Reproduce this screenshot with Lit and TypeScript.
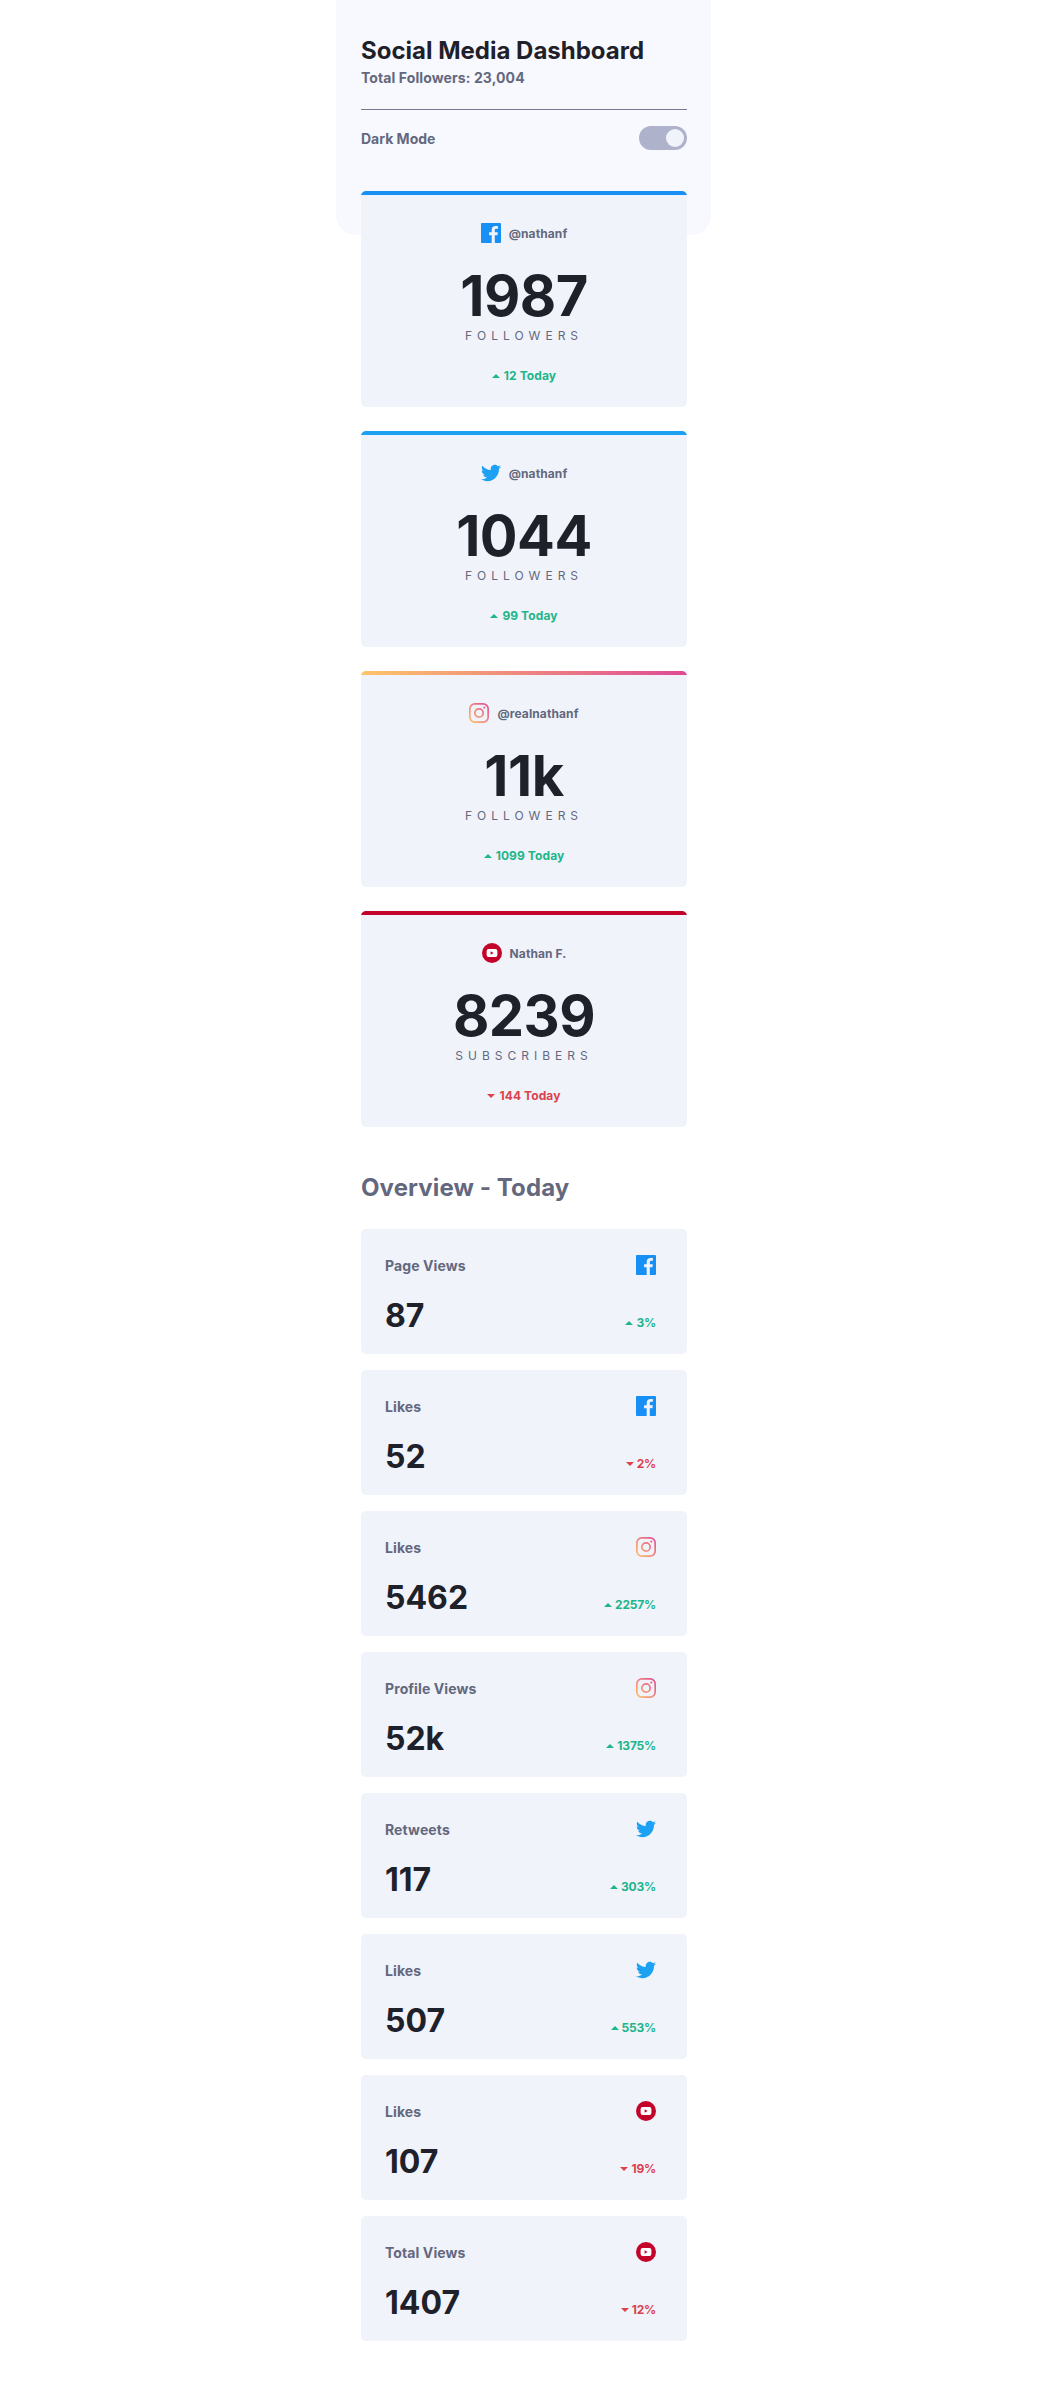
import { LitElement, html, css, svg } from 'lit';
import { customElement } from 'lit/decorators.js';

type Network = 'facebook' | 'twitter' | 'instagram' | 'youtube';

const followers: { net: Network; handle: string; count: string; label: string; delta: string; up: boolean }[] = [
  { net: 'facebook', handle: '@nathanf', count: '1987', label: 'FOLLOWERS', delta: '12 Today', up: true },
  { net: 'twitter', handle: '@nathanf', count: '1044', label: 'FOLLOWERS', delta: '99 Today', up: true },
  { net: 'instagram', handle: '@realnathanf', count: '11k', label: 'FOLLOWERS', delta: '1099 Today', up: true },
  { net: 'youtube', handle: 'Nathan F.', count: '8239', label: 'SUBSCRIBERS', delta: '144 Today', up: false },
];

const overview: { net: Network; title: string; count: string; delta: string; up: boolean }[] = [
  { net: 'facebook', title: 'Page Views', count: '87', delta: '3%', up: true },
  { net: 'facebook', title: 'Likes', count: '52', delta: '2%', up: false },
  { net: 'instagram', title: 'Likes', count: '5462', delta: '2257%', up: true },
  { net: 'instagram', title: 'Profile Views', count: '52k', delta: '1375%', up: true },
  { net: 'twitter', title: 'Retweets', count: '117', delta: '303%', up: true },
  { net: 'twitter', title: 'Likes', count: '507', delta: '553%', up: true },
  { net: 'youtube', title: 'Likes', count: '107', delta: '19%', up: false },
  { net: 'youtube', title: 'Total Views', count: '1407', delta: '12%', up: false },
];

let gradientId = 0;

function icon(net: Network) {
  if (net === 'facebook') {
    return html`<svg width="20" height="20" viewBox="0 0 20 20"><path fill="#178ff5" d="M18.896 0H1.104C.494 0 0 .494 0 1.104v17.792C0 19.506.494 20 1.104 20h9.579v-7.745H8.076V9.237h2.607V7.01c0-2.584 1.578-3.99 3.883-3.99 1.104 0 2.052.082 2.329.119v2.7h-1.598c-1.254 0-1.496.596-1.496 1.47v1.927h2.989l-.39 3.018h-2.6V20h5.097c.61 0 1.104-.494 1.104-1.104V1.104C20 .494 19.506 0 18.896 0z"/></svg>`;
  }
  if (net === 'twitter') {
    return html`<svg width="20" height="20" viewBox="0 0 24 24"><path fill="#1da1f2" d="M23.954 4.569c-.885.389-1.83.654-2.825.775 1.014-.611 1.794-1.574 2.163-2.723-.951.555-2.005.959-3.127 1.184-.896-.959-2.173-1.559-3.591-1.559-2.717 0-4.92 2.203-4.92 4.917 0 .39.045.765.127 1.124C7.691 8.094 4.066 6.13 1.64 3.161c-.427.722-.666 1.561-.666 2.475 0 1.71.87 3.213 2.188 4.096-.807-.026-1.566-.248-2.228-.616v.061c0 2.385 1.693 4.374 3.946 4.827-.413.111-.849.171-1.296.171-.314 0-.615-.03-.916-.086.631 1.953 2.445 3.377 4.604 3.417-1.68 1.319-3.809 2.105-6.102 2.105-.39 0-.779-.023-1.17-.067 2.189 1.394 4.768 2.209 7.557 2.209 9.054 0 13.999-7.496 13.999-13.986 0-.209 0-.42-.015-.63.961-.689 1.8-1.56 2.46-2.548l-.047-.02z"/></svg>`;
  }
  if (net === 'instagram') {
    const id = `ig${gradientId++}`;
    return html`<svg width="20" height="20" viewBox="0 0 20 20">
      ${svg`<defs><linearGradient id=${id} gradientUnits="userSpaceOnUse" x1="0" y1="20" x2="20" y2="0">
        <stop offset="0" stop-color="#fdc468"/><stop offset="1" stop-color="#df4996"/>
      </linearGradient></defs>
      <rect x="0.85" y="0.85" width="18.3" height="18.3" rx="5" fill="none" stroke="url(#${id})" stroke-width="1.7"/>
      <circle cx="10" cy="10" r="4.2" fill="none" stroke="url(#${id})" stroke-width="1.7"/>
      <circle cx="15.3" cy="4.6" r="1.1" fill="url(#${id})"/>`}
    </svg>`;
  }
  return html`<svg width="20" height="20" viewBox="0 0 20 20">
    <circle cx="10" cy="10" r="10" fill="#c4032b"/>
    <rect x="4.6" y="6" width="10.8" height="8" rx="2" fill="#fff"/>
    <path fill="#c4032b" d="M8.6 8.3v3.4l3-1.7z"/>
  </svg>`;
}

function arrow(up: boolean) {
  return html`<svg class="arrow" width="8" height="4" viewBox="0 0 8 4"><path fill=${up ? '#1eb589' : '#dc414c'} d=${up ? 'M0 4l4-4 4 4z' : 'M0 0l4 4 4-4z'}/></svg>`;
}

@customElement('app-root')
export class AppRoot extends LitElement {
  static styles = css`
    :host {
      display: block;
      font-family: Inter, 'Liberation Sans', sans-serif;
      color: #63687e;
      background: #fff;
    }
    .page {
      width: 375px;
      margin-left: 336px;
      padding-bottom: 46px;
    }
    header {
      box-sizing: border-box;
      height: 235px;
      padding: 33px 24px 0 25px;
      background: #f8f9fe;
      border-radius: 0 0 20px 20px;
    }
    h1 {
      margin: 0;
      font-size: 24px;
      line-height: 36px;
      font-weight: 700;
      color: #1e202a;
    }
    .total {
      margin-top: -1px;
      font-size: 14px;
      line-height: 20px;
      font-weight: 700;
      letter-spacing: 0.1px;
    }
    .toggle-row {
      display: flex;
      align-items: center;
      justify-content: space-between;
      margin-top: 21px;
      padding-top: 16px;
      border-top: 1px solid #777a92;
    }
    .toggle-row span {
      font-size: 14px;
      font-weight: 700;
    }
    .toggle {
      display: flex;
      align-items: center;
      justify-content: flex-end;
      box-sizing: border-box;
      width: 48px;
      height: 24px;
      padding-right: 3px;
      border-radius: 12px;
      background: #aeb3cb;
    }
    .knob {
      width: 18px;
      height: 18px;
      border-radius: 50%;
      background: #f0f3fa;
    }
    .content {
      position: relative;
      margin: -44px 24px 0 25px;
    }
    .followers {
      display: flex;
      flex-direction: column;
      gap: 24px;
    }
    .card {
      box-sizing: border-box;
      height: 216px;
      padding-top: 32px;
      display: flex;
      flex-direction: column;
      align-items: center;
      position: relative;
      overflow: hidden;
      background: #f0f3fa;
      border-radius: 5px;
    }
    .stripe {
      position: absolute;
      top: 0;
      left: 0;
      right: 0;
      height: 4px;
    }
    .stripe.facebook { background: #178ff5; }
    .stripe.twitter { background: #1da1f2; }
    .stripe.instagram { background: linear-gradient(90deg, #fdc468, #df4996); }
    .stripe.youtube { background: #c4032b; }
    .handle {
      display: flex;
      align-items: center;
      gap: 8px;
      height: 20px;
      font-size: 12px;
      font-weight: 700;
      letter-spacing: 0.1px;
    }
    .handle svg, .ov-top svg {
      display: block;
    }
    .count {
      margin-top: 19px;
      font-size: 56px;
      line-height: 68px;
      font-weight: 700;
      letter-spacing: -0.5px;
      color: #1e202a;
    }
    .label {
      margin-top: -2px;
      font-size: 12px;
      line-height: 16px;
      letter-spacing: 5px;
      font-weight: 400;
    }
    .delta {
      display: flex;
      align-items: center;
      gap: 4px;
      font-size: 12px;
      font-weight: 700;
      line-height: 16px;
    }
    .delta.up { color: #1eb589; }
    .delta.down { color: #dc414c; }
    .card .delta {
      margin-top: 24px;
      letter-spacing: 0.1px;
    }
    h2 {
      margin: 43px 0 23px;
      font-size: 24px;
      line-height: 36px;
      font-weight: 700;
      letter-spacing: 0.1px;
      color: #63687e;
    }
    .overview {
      display: flex;
      flex-direction: column;
      gap: 16px;
    }
    .ov-card {
      box-sizing: border-box;
      height: 125px;
      padding: 26px 31px 0 24px;
      background: #f0f3fa;
      border-radius: 5px;
    }
    .ov-top, .ov-bottom {
      display: flex;
      justify-content: space-between;
    }
    .ov-top {
      align-items: center;
      font-size: 14px;
      font-weight: 700;
      letter-spacing: 0.1px;
    }
    .ov-bottom {
      align-items: flex-end;
      margin-top: 19px;
    }
    .ov-count {
      font-size: 32px;
      line-height: 44px;
      font-weight: 700;
      color: #1e202a;
    }
    .ov-bottom .delta {
      gap: 3px;
      margin-bottom: 7px;
      letter-spacing: -0.2px;
    }
  `;

  render() {
    return html`
      <div class="page">
        <header>
          <h1>Social Media Dashboard</h1>
          <div class="total">Total Followers: 23,004</div>
          <div class="toggle-row">
            <span>Dark Mode</span>
            <div class="toggle"><div class="knob"></div></div>
          </div>
        </header>
        <div class="content">
          <section class="followers">
            ${followers.map(
              (f) => html`
                <div class="card">
                  <div class="stripe ${f.net}"></div>
                  <div class="handle">${icon(f.net)}<span>${f.handle}</span></div>
                  <div class="count">${f.count}</div>
                  <div class="label">${f.label}</div>
                  <div class="delta ${f.up ? 'up' : 'down'}">${arrow(f.up)}<span>${f.delta}</span></div>
                </div>
              `,
            )}
          </section>
          <h2>Overview - Today</h2>
          <section class="overview">
            ${overview.map(
              (o) => html`
                <div class="ov-card">
                  <div class="ov-top"><span>${o.title}</span>${icon(o.net)}</div>
                  <div class="ov-bottom">
                    <div class="ov-count">${o.count}</div>
                    <div class="delta ${o.up ? 'up' : 'down'}">${arrow(o.up)}<span>${o.delta}</span></div>
                  </div>
                </div>
              `,
            )}
          </section>
        </div>
      </div>
    `;
  }
}
